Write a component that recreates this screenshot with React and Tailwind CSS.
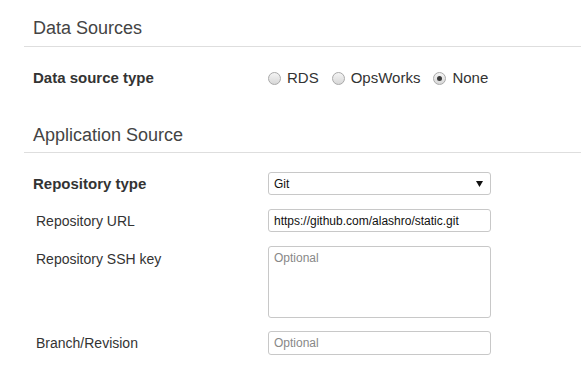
import React from "react";

//radio sencillo dibujado con css
function Radio({ label, checked }) {
  return (
    <label className="flex items-center mr-[13px]">
      <span className="w-[13px] h-[13px] rounded-full border border-[#a9a9a9] bg-gradient-to-b from-[#f4f4f4] to-[#d8d8d8] flex items-center justify-center">
        {checked && <span className="w-[5px] h-[5px] rounded-full bg-[#3a3a3a]" />}
      </span>
      <span className="ml-[6px] text-[15px] leading-[20px] text-[#333]">{label}</span>
    </label>
  );
}

function Heading({ children, pb }) {
  return (
    <div className={`border-b border-[#dedede] pl-[9px] pt-[17px] ${pb}`}>
      <h2 className="text-[18px] leading-[22px] text-[#444]">{children}</h2>
    </div>
  );
}

export default function App() {
  const inputCls =
    "w-[223px] h-[23px] border border-[#c8c8c8] rounded-[3px] px-[5px] text-[12px] text-[#111] placeholder:text-[#888] outline-none bg-white";

  return (
    <div className="w-[581px] h-[380px] bg-white font-['Liberation_Sans',Arial,sans-serif] overflow-hidden">
      <div className="ml-[24px]">
        <div className="border-b border-[#dedede] pl-[9px] pt-[17px] pb-[7px]">
          <h2 className="text-[18px] leading-[22px] text-[#444]">Data Sources</h2>
        </div>

        <div className="flex items-center mt-[21px] pl-[9px]">
          <div className="w-[235px] text-[15px] leading-[20px] font-bold text-[#333]">Data source type</div>
          <div className="flex items-center">
            <Radio label="RDS" />
            <Radio label="OpsWorks" />
            <Radio label="None" checked />
          </div>
        </div>

        <div className="mt-[36px] border-b border-[#dedede] pl-[9px] pb-[6px]">
          <h2 className="text-[18px] leading-[22px] text-[#444]">Application Source</h2>
        </div>

        <div className="flex items-center mt-[19px] pl-[9px]">
          <div className="w-[235px] text-[15px] leading-[20px] font-bold text-[#333]">Repository type</div>
          <div className="w-[223px] h-[23px] border border-[#c8c8c8] rounded-[3px] pl-[5px] pr-[7px] flex items-center justify-between text-[12px] text-[#111]">
            <span>Git</span>
            <svg width="7" height="6" viewBox="0 0 7 6">
              <polygon points="0,0 7,0 3.5,6" fill="#111" />
            </svg>
          </div>
        </div>

        <div className="flex items-center mt-[14px] pl-[9px]">
          <div className="w-[235px] pl-[3px] text-[14px] leading-[20px] text-[#333]">Repository URL</div>
          <input className={inputCls} value="https://github.com/alashro/static.git" readOnly />
        </div>

        <div className="flex items-start mt-[14px] pl-[9px]">
          <div className="w-[235px] pl-[3px] pt-[3px] text-[14px] leading-[20px] text-[#333]">Repository SSH key</div>
          <textarea
            className="w-[223px] h-[72px] border border-[#c8c8c8] rounded-[3px] px-[5px] py-[3px] text-[12px] leading-[16px] placeholder:text-[#888] outline-none resize-none"
            placeholder="Optional"
          />
        </div>

        <div className="flex items-center mt-[13px] pl-[9px]">
          <div className="w-[235px] pl-[3px] text-[14px] leading-[20px] text-[#333]">Branch/Revision</div>
          <input className={`${inputCls} h-[24px]`} placeholder="Optional" />
        </div>
      </div>
    </div>
  );
}
